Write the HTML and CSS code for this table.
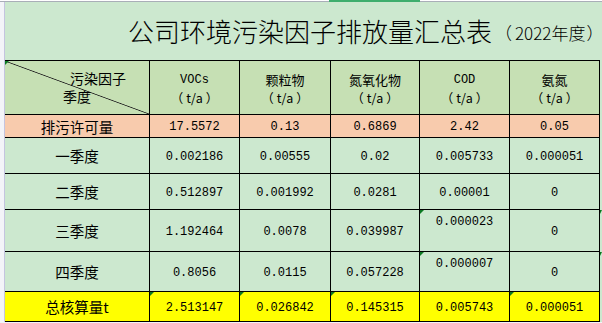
FILE: index.html
```html
<!DOCTYPE html>
<html>
<head>
    <title>公司环境污染因子排放量汇总表</title>
    <link rel="stylesheet" href="styles.css">
</head>
<body>
    <div class="ruler"><div class="ruler-sel"></div></div>
    <div class="sheet">
        <div class="title">
            <span class="title-main">公司环境污染因子排放量汇总表</span>
            <span class="title-year"><span class="paren-l">（</span>2022年度<span class="paren-r">）</span></span>
        </div>

        <div class="grid">
            <!-- header -->
            <div class="cell head corner flag">
                <span class="corner-top">污染因子</span>
                <span class="corner-bottom">季度</span>
            </div>
            <div class="cell head"><span class="num">VOCs</span><span class="unit"><span class="paren">（</span>t/a<span class="paren">）</span></span></div>
            <div class="cell head"><span>颗粒物</span><span class="unit"><span class="paren">（</span>t/a<span class="paren">）</span></span></div>
            <div class="cell head"><span>氮氧化物</span><span class="unit"><span class="paren">（</span>t/a<span class="paren">）</span></span></div>
            <div class="cell head"><span class="num">COD</span><span class="unit"><span class="paren">（</span>t/a<span class="paren">）</span></span></div>
            <div class="cell head"><span>氨氮</span><span class="unit"><span class="paren">（</span>t/a<span class="paren">）</span></span></div>

            <!-- permit -->
            <div class="cell permit label">排污许可量</div>
            <div class="cell permit num">17.5572</div>
            <div class="cell permit num">0.13</div>
            <div class="cell permit num">0.6869</div>
            <div class="cell permit num">2.42</div>
            <div class="cell permit num">0.05</div>

            <!-- quarters -->
            <div class="cell label">一季度</div>
            <div class="cell num">0.002186</div>
            <div class="cell num">0.00555</div>
            <div class="cell num">0.02</div>
            <div class="cell num">0.005733</div>
            <div class="cell num">0.000051</div>

            <div class="cell label">二季度</div>
            <div class="cell num">0.512897</div>
            <div class="cell num">0.001992</div>
            <div class="cell num">0.0281</div>
            <div class="cell num">0.00001</div>
            <div class="cell num">0</div>

            <div class="cell label">三季度</div>
            <div class="cell num">1.192464</div>
            <div class="cell num">0.0078</div>
            <div class="cell num">0.039987</div>
            <div class="cell num top flag">0.000023</div>
            <div class="cell num">0</div>

            <div class="cell label">四季度</div>
            <div class="cell num">0.8056</div>
            <div class="cell num">0.0115</div>
            <div class="cell num">0.057228</div>
            <div class="cell num top flag">0.000007</div>
            <div class="cell num">0</div>

            <!-- total -->
            <div class="cell total label">总核算量t</div>
            <div class="cell total num flag">2.513147</div>
            <div class="cell total num flag">0.026842</div>
            <div class="cell total num flag">0.145315</div>
            <div class="cell total num">0.005743</div>
            <div class="cell total num flag">0.000051</div>
        </div>
        <div class="edge-flags">
            <span class="edge-flag edge-3"></span>
            <span class="edge-flag edge-4"></span>
        </div>
    </div>
</body>
</html>
```

FILE: styles.css
```css
body {
    margin: 0;
    background-color: #f3f4f8;
    font-family: "Noto Sans CJK SC", sans-serif;
    color: #000;
}
.ruler {
    height: 2px;
    background: linear-gradient(#ffffff 0 1px, #a9aeb8 1px);
}
.ruler-sel {
    margin-left: 329px;
    width: 91px;
    height: 2px;
    background-color: #3fae6e;
}
.sheet {
    position: relative;
    margin-left: 4px;
    border-left: 1px solid #c4c4df;
    background-color: #cce8cf;
    width: 597px;
}
.title {
    height: 58px;
    display: flex;
    align-items: center;
    padding-left: 123px;
    white-space: nowrap;
}
.title-main {
    font-size: 26px;
    line-height: 30px;
    font-weight: 300;
}
.title-year {
    font-size: 17px;
    line-height: 30px;
    font-weight: 300;
    padding-top: 3px;
    margin-left: 3px;
}
.paren-l {
    padding-right: 3px;
}
.paren-r {
    padding-left: 1px;
}
.grid {
    display: grid;
    grid-template-columns: 144px 89px 90px 88px 89px 89px;
    grid-template-rows: 53px 22px 35px 35px 41px 39px 29px;
    gap: 1px;
    padding: 1px 1px 1px 0;
    background-color: #000;
    width: 594px;
}
.cell {
    position: relative;
    background-color: #cce8cf;
    display: flex;
    align-items: center;
    justify-content: center;
    font-size: 14px;
}
.num {
    font-family: "Liberation Mono", "Noto Sans CJK SC", monospace;
    font-size: 12px;
}
.cell.num {
    padding-top: 2px;
}
.label {
    font-size: 14.5px;
}
.head {
    background-color: #c6e0b4;
    flex-direction: column;
    font-size: 13px;
    line-height: 18px;
    padding-top: 2px;
}
.unit {
    font-size: 12.5px;
}
.unit .paren {
    padding: 0 3px;
}
.corner {
    align-items: flex-start;
    justify-content: flex-start;
    padding-top: 8px;
    font-size: 14px;
    background: linear-gradient(to top right, #c6e0b4 calc(50% - 0.8px), #222 50%, #c6e0b4 calc(50% + 0.8px));
}
.corner-top {
    margin-left: 65px;
}
.corner-bottom {
    margin-left: 58px;
}
.permit {
    background-color: #f8cbad;
}
.total {
    background-color: #ffff00;
}
.cell.top {
    align-items: flex-start;
    padding-top: 5px;
}
.flag::before {
    content: "";
    position: absolute;
    top: 0;
    left: 0;
    border-top: 4px solid #0b7a22;
    border-right: 4px solid transparent;
}
.edge-flag {
    position: absolute;
    left: 595px;
    border-top: 4px solid #0b7a22;
    border-right: 2px solid transparent;
}
.edge-3 {
    top: 208px;
}
.edge-4 {
    top: 250px;
}
```
